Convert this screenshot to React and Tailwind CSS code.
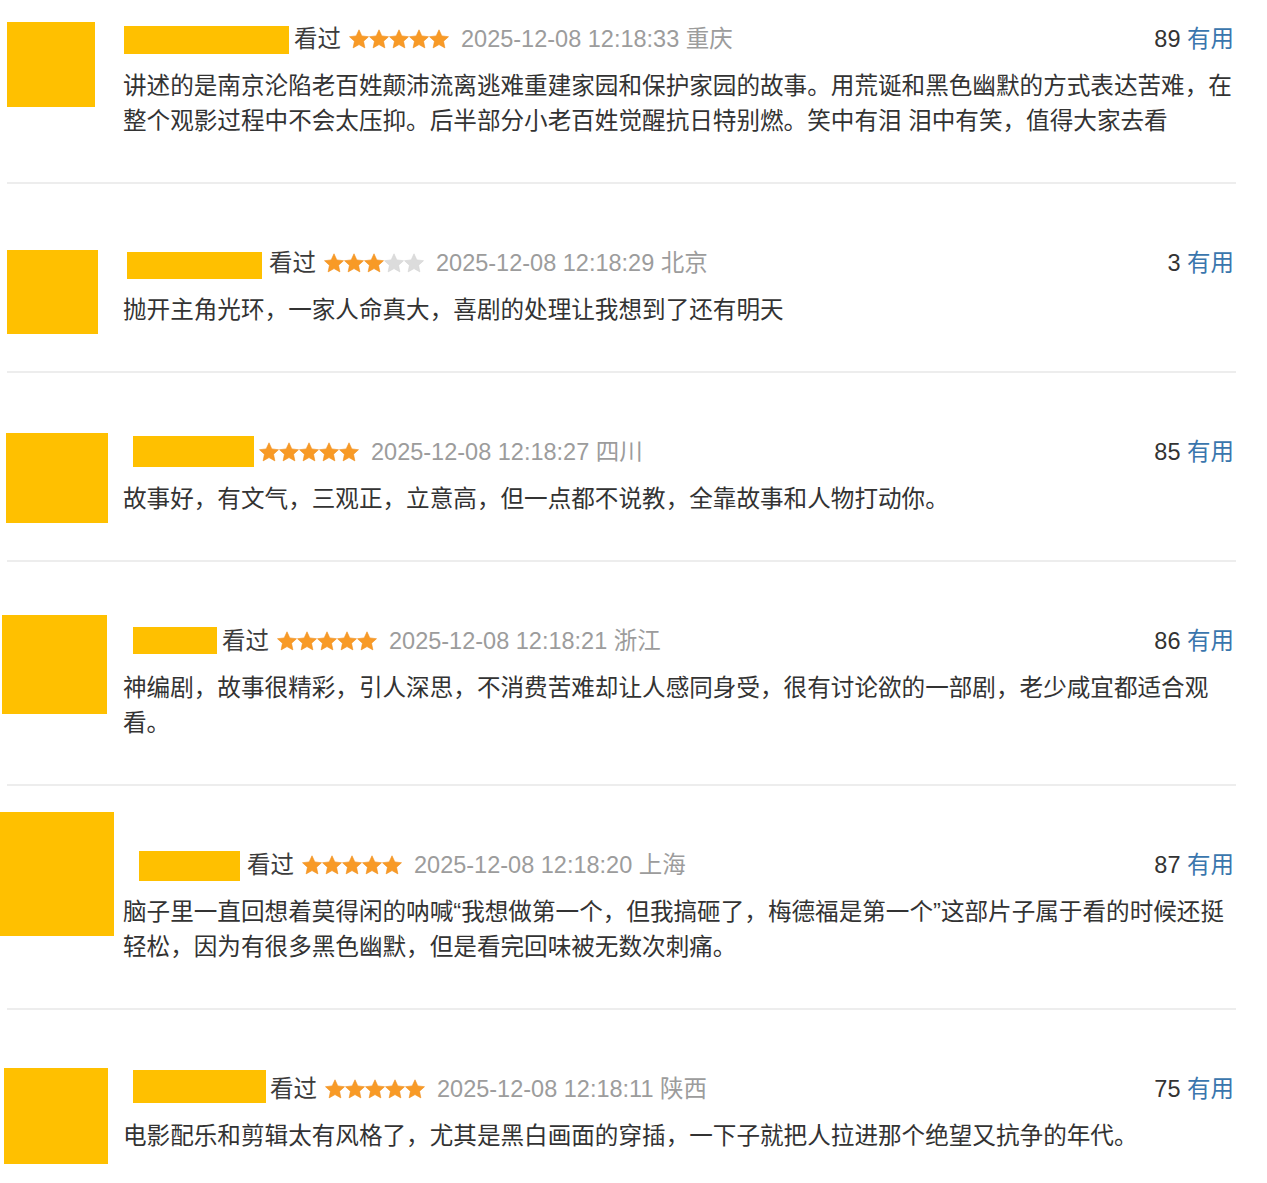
import { Fragment } from 'react';

const font = 'font-["Liberation_Sans","Noto_Sans_CJK_SC",sans-serif]';

const comments = [
  {
    avatar: 'ml-[7px] mt-[1px] w-[88px] h-[85px]',
    name: 'ml-[1px] mr-[5px] mt-[5px] w-[165px] h-[28px]',
    watched: true,
    rating: 5,
    time: '2025-12-08 12:18:33',
    place: '重庆',
    votes: 89,
    lines: [
      '讲述的是南京沦陷老百姓颠沛流离逃难重建家园和保护家园的故事。用荒诞和黑色幽默的方式表达苦难，在',
      '整个观影过程中不会太压抑。后半部分小老百姓觉醒抗日特别燃。笑中有泪 泪中有笑，值得大家去看',
    ],
  },
  {
    avatar: 'ml-[7px] mt-[5px] w-[91px] h-[84px]',
    name: 'ml-[4px] mr-[7px] mt-[7px] w-[135px] h-[27px]',
    watched: true,
    rating: 3,
    time: '2025-12-08 12:18:29',
    place: '北京',
    votes: 3,
    lines: ['抛开主角光环，一家人命真大，喜剧的处理让我想到了还有明天'],
  },
  {
    avatar: 'ml-[6px] -mt-[1px] w-[102px] h-[90px]',
    name: 'ml-[10px] mr-[5px] mt-[2px] w-[121px] h-[31px]',
    watched: false,
    rating: 5,
    time: '2025-12-08 12:18:27',
    place: '四川',
    votes: 85,
    lines: ['故事好，有文气，三观正，立意高，但一点都不说教，全靠故事和人物打动你。'],
  },
  {
    avatar: 'ml-[2px] -mt-[8px] w-[105px] h-[99px]',
    name: 'ml-[10px] mr-[5px] mt-[4px] w-[84px] h-[27px]',
    watched: true,
    rating: 5,
    time: '2025-12-08 12:18:21',
    place: '浙江',
    votes: 86,
    lines: [
      '神编剧，故事很精彩，引人深思，不消费苦难却让人感同身受，很有讨论欲的一部剧，老少咸宜都适合观',
      '看。',
    ],
  },
  {
    avatar: 'ml-0 -mt-[35px] w-[114px] h-[124px]',
    name: 'ml-[16px] mr-[7px] mt-[4px] w-[101px] h-[30px]',
    watched: true,
    rating: 5,
    time: '2025-12-08 12:18:20',
    place: '上海',
    votes: 87,
    lines: [
      '脑子里一直回想着莫得闲的呐喊“我想做第一个，但我搞砸了，梅德福是第一个”这部片子属于看的时候还挺',
      '轻松，因为有很多黑色幽默，但是看完回味被无数次刺痛。',
    ],
  },
  {
    avatar: 'ml-[4px] -mt-[3px] w-[104px] h-[96px]',
    name: 'ml-[10px] mr-[4px] -mt-[1px] w-[133px] h-[33px]',
    watched: true,
    rating: 5,
    time: '2025-12-08 12:18:11',
    place: '陕西',
    votes: 75,
    lines: ['电影配乐和剪辑太有风格了，尤其是黑白画面的穿插，一下子就把人拉进那个绝望又抗争的年代。'],
  },
];

const STAR = '10,0.8 12.82,6.92 19.51,7.71 14.56,12.28 15.88,18.89 10,15.6 4.12,18.89 5.44,12.28 0.49,7.71 7.18,6.92';

function Stars({ value }) {
  return (
    <svg width="100" height="20" viewBox="0 0 100 20" className="shrink-0">
      {[0, 1, 2, 3, 4].map((i) => (
        <polygon
          key={i}
          transform={`translate(${i * 20} 0)`}
          points={STAR}
          fill={i < value ? '#f89a26' : '#dcdcdc'}
          stroke={i < value ? '#f08f1c' : '#d4d4d4'}
          strokeWidth="0.6"
          strokeLinejoin="round"
        />
      ))}
    </svg>
  );
}

function Comment({ c, first }) {
  return (
    <section className={`flex items-start pb-[43px] ${first ? 'pt-[21px]' : 'pt-[61px]'}`}>
      <div className="h-0 w-[123px] shrink-0">
        <div className={`bg-[#ffc000] ${c.avatar}`} />
      </div>
      <div className="w-[1111px] shrink-0">
        <div className="flex h-[36px] items-center text-[23.5px] leading-[36px]">
          <div className={`shrink-0 self-start bg-[#ffc000] ${c.name}`} />
          {c.watched && <span className="mr-[8px] text-[#3c3c3c]">看过</span>}
          <Stars value={c.rating} />
          <span className="ml-[12px] text-[#9c9c9c]">
            {c.time} {c.place}
          </span>
          <span className="ml-auto text-[#333]">
            {c.votes} <span className="text-[#3a76ad]">有用</span>
          </span>
        </div>
        <div className="mt-[12px] text-[23.6px] leading-[35px] text-[#333]">
          {c.lines.map((l, i) => (
            <div key={i} className="whitespace-pre">{l}</div>
          ))}
        </div>
      </div>
    </section>
  );
}

export default function App() {
  return (
    <div className={`min-h-[1183px] w-[1267px] bg-white ${font}`}>
      {comments.map((c, i) => (
        <Fragment key={i}>
          {i > 0 && <div className="ml-[7px] h-[2px] w-[1229px] bg-[#ededed]" />}
          <Comment c={c} first={i === 0} />
        </Fragment>
      ))}
    </div>
  );
}
